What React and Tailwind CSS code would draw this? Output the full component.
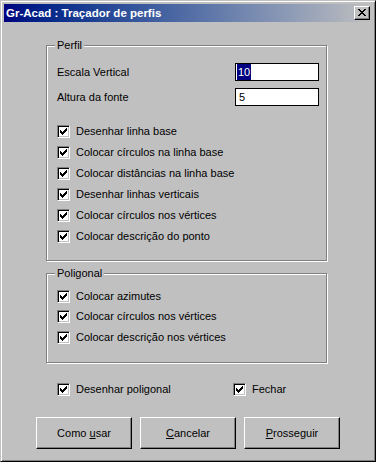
import React from "react";

function CheckMark() {
  return (
    <svg width="7" height="7" viewBox="0 0 7 7" shapeRendering="crispEdges">
      <path
        d="M0 2h1v3H0zM1 3h1v3H1zM2 4h1v3H2zM3 3h1v3H3zM4 2h1v3H4zM5 1h1v3H5zM6 0h1v3H6z"
        fill="#000"
      />
    </svg>
  );
}

function CloseGlyph() {
  return (
    <svg width="8" height="7" viewBox="0 0 8 7" shapeRendering="crispEdges">
      <path
        d="M0 0h2v1H0zM6 0h2v1H6zM1 1h2v1H1zM5 1h2v1H5zM2 2h4v1H2zM3 3h2v1H3zM2 4h4v1H2zM1 5h2v1H1zM5 5h2v1H5zM0 6h2v1H0zM6 6h2v1H6z"
        fill="#000"
      />
    </svg>
  );
}

function Check({ label, className = "" }) {
  return (
    <div className={`flex h-[13px] items-center gap-[6px] ${className}`}>
      <span className="flex h-[13px] w-[13px] shrink-0 items-center justify-center border border-t-[#808080] border-l-[#808080] border-b-white border-r-white bg-white shadow-[inset_1px_1px_0_#000,inset_-1px_-1px_0_#c0c0c0]">
        <CheckMark />
      </span>
      <span className="whitespace-nowrap leading-[13px]">{label}</span>
    </div>
  );
}

function Group({ title, className = "", children }) {
  return (
    <div
      className={`relative ml-[42px] w-[281px] border border-[#808080] shadow-[inset_1px_1px_0_#fff,1px_1px_0_#fff] ${className}`}
    >
      <span className="absolute -top-[7px] left-[8px] bg-[#c0c0c0] px-[2px] leading-[13px]">
        {title}
      </span>
      {children}
    </div>
  );
}

function Button({ children }) {
  return (
    <button className="flex h-[32px] w-[96px] items-center justify-center border border-t-white border-l-white border-b-black border-r-black bg-[#c0c0c0] text-[11px] text-black shadow-[inset_-1px_-1px_0_#808080]">
      <span className="whitespace-pre">{children}</span>
    </button>
  );
}

export default function App() {
  return (
    <div className="h-[462px] w-[376px] overflow-hidden border border-t-[#c0c0c0] border-l-[#c0c0c0] border-b-black border-r-black bg-[#c0c0c0] p-[3px] font-['Liberation_Sans',Arial,sans-serif] text-[11px] text-black shadow-[inset_1px_1px_0_#fff,inset_-1px_-1px_0_#808080]">
      {/* title bar */}
      <div className="flex h-[18px] items-center justify-between bg-linear-to-r from-[#000080] to-[#c0c0c0] pl-[2px] pr-[2px]">
        <span className="text-[11.5px] font-bold leading-[14px] text-white">
          Gr-Acad : Traçador de perfis
        </span>
        <span className="block h-[14px] w-[16px] border border-t-white border-l-white border-b-black border-r-black bg-[#c0c0c0] pl-[3px] pt-[2px] shadow-[inset_-1px_-1px_0_#808080]">
          <CloseGlyph />
        </span>
      </div>

      <Group title="Perfil" className="mt-[23px] h-[216px] pl-[10px] pt-[17px]">
        <div className="flex h-[18px] items-center justify-between pr-[7px]">
          <span>Escala Vertical</span>
          <div className="flex h-[18px] w-[84px] items-stretch border border-black bg-white pl-[1px]">
            <span className="bg-[#000080] px-[1px] leading-[16px] text-white">10</span>
          </div>
        </div>
        <div className="mt-[7px] flex h-[18px] items-center justify-between pr-[7px]">
          <span>Altura da fonte</span>
          <div className="flex h-[18px] w-[84px] items-center border border-black bg-white pl-[3px] leading-[16px]">
            5
          </div>
        </div>
        <div className="mt-[19px] flex flex-col gap-[8px]">
          <Check label="Desenhar linha base" />
          <Check label="Colocar círculos na linha base" />
          <Check label="Colocar distâncias na linha base" />
          <Check label="Desenhar linhas verticais" />
          <Check label="Colocar círculos nos vértices" />
          <Check label="Colocar descrição do ponto" />
        </div>
      </Group>

      <Group title="Poligonal" className="mt-[12px] h-[90px] pl-[10px] pt-[16px]">
        <Check label="Colocar azimutes" />
        <Check label="Colocar círculos nos vértices" className="mt-[7px]" />
        <Check label="Colocar descrição nos vértices" className="mt-[8px]" />
      </Group>

      <div className="ml-[53px] mt-[20px] flex">
        <div className="w-[176px]">
          <Check label="Desenhar poligonal" />
        </div>
        <Check label="Fechar" />
      </div>

      <div className="ml-[32px] mt-[21px] flex gap-[8px]">
        <Button>
          Como <span className="underline">u</span>sar
        </Button>
        <Button>
          <span className="underline">C</span>ancelar
        </Button>
        <Button>
          <span className="underline">P</span>rosseguir
        </Button>
      </div>
    </div>
  );
}
